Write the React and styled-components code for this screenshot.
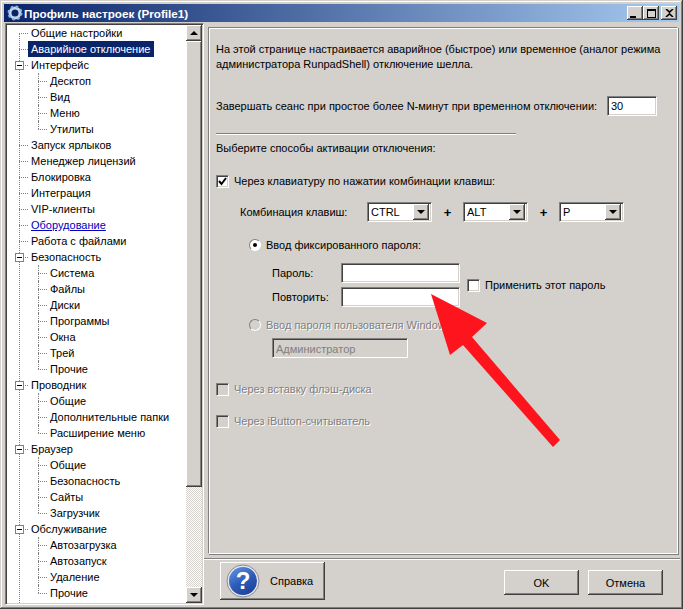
import styled, { createGlobalStyle } from "styled-components";

const FONT = `"Liberation Sans", Arial, sans-serif`;

const treeItems = [
    { label: "Общие настройки" },
    { label: "Аварийное отключение", selected: true },
    { label: "Интерфейс", box: true },
    { label: "Десктоп", level: 1 },
    { label: "Вид", level: 1 },
    { label: "Меню", level: 1 },
    { label: "Утилиты", level: 1, last: true },
    { label: "Запуск ярлыков" },
    { label: "Менеджер лицензий" },
    { label: "Блокировка" },
    { label: "Интеграция" },
    { label: "VIP-клиенты" },
    { label: "Оборудование", link: true },
    { label: "Работа с файлами" },
    { label: "Безопасность", box: true },
    { label: "Система", level: 1 },
    { label: "Файлы", level: 1 },
    { label: "Диски", level: 1 },
    { label: "Программы", level: 1 },
    { label: "Окна", level: 1 },
    { label: "Трей", level: 1 },
    { label: "Прочие", level: 1, last: true },
    { label: "Проводник", box: true },
    { label: "Общие", level: 1 },
    { label: "Дополнительные папки", level: 1 },
    { label: "Расширение меню", level: 1, last: true },
    { label: "Браузер", box: true },
    { label: "Общие", level: 1 },
    { label: "Безопасность", level: 1 },
    { label: "Сайты", level: 1 },
    { label: "Загрузчик", level: 1, last: true },
    { label: "Обслуживание", box: true },
    { label: "Автозагрузка", level: 1 },
    { label: "Автозапуск", level: 1 },
    { label: "Удаление", level: 1 },
    { label: "Прочие", level: 1, last: true },
];

const App = () => {
    return (
        <>
            <GlobalStyle />
            <Window>
                <TitleBar>
                    <GearIcon />
                    <TitleText>Профиль настроек (Profile1)</TitleText>
                    <CaptionButtons>
                        <CaptionButton><MinGlyph /></CaptionButton>
                        <CaptionButton><MaxGlyph /></CaptionButton>
                        <CloseButton>
                            <svg width="9" height="8" viewBox="0 0 9 8">
                                <path d="M1 0l3.500 3.200L8 0M1 8l3.500-3.200L8 8" stroke="#000" strokeWidth="1.600" fill="none" />
                            </svg>
                        </CloseButton>
                    </CaptionButtons>
                </TitleBar>
                <Body>
                    <Tree>
                        <TreeList>
                            {treeItems.map((item, i) => (
                                <TreeRow key={i} $level={item.level || 0} $last={item.last}>
                                    {item.box && <Expander />}
                                    <TreeLabel $selected={item.selected} $link={item.link}>{item.label}</TreeLabel>
                                </TreeRow>
                            ))}
                        </TreeList>
                        <ScrollBar>
                            <ScrollButton><ArrowUp /></ScrollButton>
                            <ScrollThumb />
                            <ScrollTrack />
                            <ScrollButton><ArrowDown /></ScrollButton>
                        </ScrollBar>
                    </Tree>
                    <RightSide>
                        <Panel>
                            <Intro>
                                На этой странице настраивается аварийное (быстрое) или временное (аналог режима<br />
                                администратора RunpadShell) отключение шелла.
                            </Intro>
                            <TimeoutRow>
                                <span>Завершать сеанс при простое более N-минут при временном отключении:</span>
                                <TimeoutInput>30</TimeoutInput>
                            </TimeoutRow>
                            <Divider />
                            <Heading>Выберите способы активации отключения:</Heading>
                            <CheckRow $mt={17}>
                                <CheckBox $checked>
                                    <svg width="9" height="9" viewBox="0 0 9 9">
                                        <path d="M1 4l2.500 3L8 1" stroke="#000" strokeWidth="2" fill="none" />
                                    </svg>
                                </CheckBox>
                                <span>Через клавиатуру по нажатии комбинации клавиш:</span>
                            </CheckRow>
                            <ComboRow>
                                <ComboLabel>Комбинация клавиш:</ComboLabel>
                                <Combo value="CTRL" />
                                <Plus>+</Plus>
                                <Combo value="ALT" />
                                <Plus>+</Plus>
                                <Combo value="P" />
                            </ComboRow>
                            <RadioRow $mt={15}>
                                <Radio $on />
                                <span>Ввод фиксированного пароля:</span>
                            </RadioRow>
                            <PasswordGrid>
                                <FieldLabel>Пароль:</FieldLabel>
                                <Field />
                                <ApplyRow>
                                    <CheckBox />
                                    <span>Применить этот пароль</span>
                                </ApplyRow>
                                <FieldLabel>Повторить:</FieldLabel>
                                <Field />
                            </PasswordGrid>
                            <RadioRow $mt={10} $disabled>
                                <Radio />
                                <span>Ввод пароля пользователя Windows:</span>
                            </RadioRow>
                            <UserField>Администратор</UserField>
                            <CheckRow $mt={23} $disabled>
                                <CheckBox $disabled />
                                <span>Через вставку флэш-диска</span>
                            </CheckRow>
                            <CheckRow $mt={16} $disabled>
                                <CheckBox $disabled />
                                <span>Через iButton-считыватель</span>
                            </CheckRow>
                        </Panel>
                        <FooterRule />
                        <Footer>
                            <HelpButton>
                                <HelpIcon>
                                    <svg width="34" height="34" viewBox="0 0 34 34">
                                        <defs>
                                            <linearGradient id="helpBlue" x1="0.2" y1="0" x2="0.8" y2="1">
                                                <stop offset="0" stopColor="#5f8fe0" />
                                                <stop offset="0.5" stopColor="#2c5cb8" />
                                                <stop offset="1" stopColor="#1c3f96" />
                                            </linearGradient>
                                        </defs>
                                        <circle cx="17" cy="17" r="16" fill="#e8e8ec" stroke="#8a8a98" />
                                        <circle cx="17" cy="17" r="14" fill="url(#helpBlue)" />
                                    </svg>
                                    <HelpMark>?</HelpMark>
                                </HelpIcon>
                                <span>Справка</span>
                            </HelpButton>
                            <FooterActions>
                                <PushButton>OK</PushButton>
                                <PushButton $wide>Отмена</PushButton>
                            </FooterActions>
                        </Footer>
                    </RightSide>
                </Body>
                <ArrowOverlay width="683" height="609" viewBox="0 0 683 609">
                    <path d="M431 294L487 323L472 337L560 440L553 447L463 345L450 355Z" fill="#fe141c" />
                </ArrowOverlay>
            </Window>
        </>
    );
};

const GearIcon = () => (
    <svg width="16" height="16" viewBox="0 0 16 16">
        <circle cx="8" cy="8" r="5" fill="none" stroke="#c4d6ec" strokeWidth="3" />
        <circle cx="8" cy="8" r="6.500" fill="none" stroke="#8fb0d8" strokeWidth="2" strokeDasharray="2.500 2.600" />
        <circle cx="8" cy="8" r="2.500" fill="#0a246a" />
    </svg>
);

const Combo = ({ value }) => (
    <ComboBox>
        <ComboValue>{value}</ComboValue>
        <ComboButton><ArrowDown /></ComboButton>
    </ComboBox>
);

const GlobalStyle = createGlobalStyle`
    html, body {
        margin: 0;
        padding: 0;
        background: #d4d0cc;
    }
    body {
        font-family: ${FONT};
        font-size: 11px;
        color: #000;
    }
`;

const Window = styled.div`
    position: relative;
    box-sizing: border-box;
    width: 683px;
    height: 609px;
    padding: 4px 4px 4px 4px;
    background: #d4d0cc;
    display: flex;
    flex-direction: column;
    overflow: hidden;
    box-shadow: inset -1px -1px 0 #404040, inset 1px 1px 0 #d4d0cc, inset -2px -2px 0 #808080, inset 2px 2px 0 #fff;
`;

const TitleBar = styled.div`
    height: 18px;
    flex: none;
    display: flex;
    align-items: center;
    padding: 0 2px 0 3px;
    gap: 1px;
    background: linear-gradient(90deg, #0a246a, #a6caf0);
`;

const TitleText = styled.div`
    flex: 1;
    color: #fff;
    font-size: 11.700px;
    font-weight: bold;
`;

const CaptionButtons = styled.div`
    display: flex;
`;

const CaptionButton = styled.div`
    box-sizing: border-box;
    width: 16px;
    height: 14px;
    display: flex;
    align-items: center;
    justify-content: center;
    background: #d4d0cc;
    box-shadow: inset -1px -1px 0 #404040, inset 1px 1px 0 #fff, inset -2px -2px 0 #808080;
`;

const CloseButton = styled(CaptionButton)`
    margin-left: 2px;
`;

const MinGlyph = styled.div`
    width: 6px;
    height: 2px;
    background: #000;
    margin: 7px 4px 0 0;
`;

const MaxGlyph = styled.div`
    box-sizing: border-box;
    width: 9px;
    height: 9px;
    border: 1px solid #000;
    border-top-width: 2px;
`;

const Body = styled.div`
    flex: 1;
    min-height: 0;
    display: flex;
    padding-top: 1px;
`;

const Tree = styled.div`
    box-sizing: border-box;
    width: 199px;
    margin-left: 1px;
    flex: none;
    display: flex;
    background: #fff;
    border: 1px solid #808080;
    border-right-color: #fff;
    border-bottom-color: #fff;
    box-shadow: inset 1px 1px 0 #404040, inset -1px -1px 0 #d4d0cc;
    padding: 1px 1px 1px 1px;
    overflow: hidden;
`;

const TreeList = styled.div`
    position: relative;
    flex: 1;
    min-width: 0;
    overflow: hidden;
    &::before {
        content: "";
        position: absolute;
        left: 12px;
        top: 8px;
        bottom: 0;
        border-left: 1px dotted #808080;
    }
`;

const TreeRow = styled.div`
    position: relative;
    height: 16px;
    display: flex;
    align-items: center;
    padding-left: ${(p) => (p.$level === 1 ? 40 : 21)}px;
    &::before {
        content: "";
        position: absolute;
        left: ${(p) => (p.$level === 1 ? 31 : 12)}px;
        top: 8px;
        width: 9px;
        border-top: 1px dotted #808080;
    }
    &::after {
        content: "";
        display: ${(p) => (p.$level === 1 ? "block" : "none")};
        position: absolute;
        left: 31px;
        top: 0;
        height: ${(p) => (p.$last ? 8 : 16)}px;
        border-left: 1px dotted #808080;
    }
`;

const TreeLabel = styled.span`
    padding: 1px 4px 1px 3px;
    line-height: 14px;
    white-space: nowrap;
    background: ${(p) => (p.$selected ? "#0a246a" : "transparent")};
    color: ${(p) => (p.$selected ? "#fff" : p.$link ? "#0000c0" : "#000")};
    text-decoration: ${(p) => (p.$link ? "underline" : "none")};
`;

const Expander = styled.div`
    position: absolute;
    z-index: 1;
    left: 8px;
    top: 4px;
    box-sizing: border-box;
    width: 9px;
    height: 9px;
    border: 1px solid #808080;
    background: #fff;
    &::after {
        content: "";
        position: absolute;
        left: 1px;
        top: 3px;
        width: 5px;
        height: 1px;
        background: #000;
    }
`;

const ScrollBar = styled.div`
    width: 16px;
    flex: none;
    display: flex;
    flex-direction: column;
`;

const ScrollButton = styled.div`
    box-sizing: border-box;
    height: 16px;
    flex: none;
    display: flex;
    align-items: center;
    justify-content: center;
    background: #d4d0cc;
    box-shadow: inset -1px -1px 0 #404040, inset 1px 1px 0 #fff, inset -2px -2px 0 #808080;
`;

const ArrowUp = styled.div`
    width: 0;
    height: 0;
    border-left: 4px solid transparent;
    border-right: 4px solid transparent;
    border-bottom: 4px solid #000;
`;

const ArrowDown = styled.div`
    width: 0;
    height: 0;
    border-left: 4px solid transparent;
    border-right: 4px solid transparent;
    border-top: 4px solid #000;
`;

const ScrollThumb = styled.div`
    height: 446px;
    flex: none;
    box-sizing: border-box;
    background: #d4d0cc;
    box-shadow: inset -1px -1px 0 #404040, inset 1px 1px 0 #fff, inset -2px -2px 0 #808080;
`;

const ScrollTrack = styled.div`
    flex: 1;
    background-color: #fff;
    background-image: conic-gradient(#d4d0cc 25%, #fff 0 50%, #d4d0cc 0 75%, #fff 0);
    background-size: 2px 2px;
`;

const RightSide = styled.div`
    flex: 1;
    min-width: 0;
    display: flex;
    flex-direction: column;
    padding-left: 4px;
`;

const Panel = styled.div`
    box-sizing: border-box;
    height: 527px;
    width: 470px;
    margin-top: 4px;
    padding: 14px 8px 0 7px;
    border: 1px solid #808080;
    border-right-color: #fff;
    border-bottom-color: #fff;
    box-shadow: inset 1px 1px 0 #fff, 1px 1px 0 #808080;
`;

const Intro = styled.div`
    line-height: 15px;
`;

const TimeoutRow = styled.div`
    margin-top: 24px;
    height: 20px;
    display: flex;
    align-items: center;
    justify-content: space-between;
    padding-right: 12px;
`;

const Sunken = styled.div`
    box-sizing: border-box;
    background: #fff;
    border: 1px solid;
    border-color: #808080 #fff #fff #808080;
    box-shadow: inset 1px 1px 0 #404040, inset -1px -1px 0 #d4d0cc;
`;

const TimeoutInput = styled(Sunken)`
    width: 50px;
    height: 20px;
    padding: 2px 3px;
    line-height: 14px;
`;

const Divider = styled.div`
    margin-top: 17px;
    width: 300px;
    border-top: 1px solid #808080;
    border-bottom: 1px solid #fff;
`;

const Heading = styled.div`
    margin-top: 6px;
    line-height: 15px;
`;

const CheckRow = styled.div`
    margin-top: ${(p) => p.$mt}px;
    height: 16px;
    display: flex;
    align-items: center;
    gap: 5px;
    color: ${(p) => (p.$disabled ? "#808080" : "#000")};
    text-shadow: ${(p) => (p.$disabled ? "1px 1px 0 #fff" : "none")};
`;

const CheckBox = styled(Sunken)`
    width: 13px;
    height: 13px;
    flex: none;
    display: flex;
    align-items: center;
    justify-content: center;
    background: ${(p) => (p.$disabled ? "#d4d0cc" : "#fff")};
`;

const ComboRow = styled.div`
    margin-top: 13px;
    height: 20px;
    display: flex;
    align-items: center;
    padding-left: 24px;
`;

const ComboLabel = styled.div`
    width: 127px;
    flex: none;
`;

const ComboBox = styled(Sunken)`
    width: 65px;
    height: 20px;
    flex: none;
    display: flex;
    align-items: center;
    justify-content: space-between;
    padding: 0 2px 0 3px;
`;

const ComboValue = styled.span`
    line-height: 14px;
`;

const ComboButton = styled.div`
    width: 16px;
    height: 16px;
    display: flex;
    align-items: center;
    justify-content: center;
    background: #d4d0cc;
    box-shadow: inset -1px -1px 0 #404040, inset 1px 1px 0 #fff, inset -2px -2px 0 #808080;
`;

const Plus = styled.div`
    width: 31px;
    flex: none;
    text-align: center;
    font-weight: bold;
    font-size: 13px;
`;

const RadioRow = styled.div`
    margin-top: ${(p) => p.$mt}px;
    height: 16px;
    display: flex;
    align-items: center;
    gap: 5px;
    padding-left: 33px;
    color: ${(p) => (p.$disabled ? "#808080" : "#000")};
    text-shadow: ${(p) => (p.$disabled ? "1px 1px 0 #fff" : "none")};
`;

const Radio = styled.div`
    position: relative;
    box-sizing: border-box;
    width: 12px;
    height: 12px;
    flex: none;
    border-radius: 50%;
    border: 1px solid;
    border-color: #808080 #fff #fff #808080;
    background: ${(p) => (p.$on ? "#fff" : "#d4d0cc")};
    &::after {
        content: "";
        display: ${(p) => (p.$on ? "block" : "none")};
        position: absolute;
        left: 3px;
        top: 3px;
        width: 4px;
        height: 4px;
        border-radius: 50%;
        background: #000;
    }
`;

const PasswordGrid = styled.div`
    margin-top: 10px;
    padding-left: 56px;
    display: grid;
    grid-template-columns: 69px 119px auto;
    grid-auto-rows: 20px;
    row-gap: 4px;
    align-items: center;
`;

const FieldLabel = styled.div``;

const Field = styled(Sunken)`
    height: 20px;
`;

const ApplyRow = styled.div`
    grid-column: 3;
    grid-row: 1 / 3;
    display: flex;
    align-items: center;
    gap: 5px;
    margin-left: 7px;
`;

const UserField = styled(Sunken)`
    margin: 5px 0 0 56px;
    width: 136px;
    height: 20px;
    padding: 3px 3px 0;
    line-height: 14px;
    color: #808080;
    background: #d4d0cc;
`;

const FooterRule = styled.div`
    margin: 4px -1px 0 -4px;
    border-top: 1px solid #808080;
    border-bottom: 1px solid #fff;
`;

const Footer = styled.div`
    flex: 1;
    display: flex;
    align-items: flex-start;
    justify-content: space-between;
    padding: 2px 16px 0 12px;
`;

const Raised = styled.div`
    box-sizing: border-box;
    display: flex;
    align-items: center;
    justify-content: center;
    background: #d4d0cc;
    box-shadow: inset -1px -1px 0 #404040, inset 1px 1px 0 #fff, inset -2px -2px 0 #808080;
`;

const HelpButton = styled(Raised)`
    width: 105px;
    height: 38px;
    gap: 10px;
    justify-content: flex-start;
    padding-left: 6px;
`;

const HelpIcon = styled.div`
    position: relative;
    width: 34px;
    height: 34px;
    display: flex;
`;

const HelpMark = styled.span`
    position: absolute;
    inset: 0;
    display: flex;
    align-items: center;
    justify-content: center;
    color: #fff;
    font-size: 24px;
    font-weight: bold;
`;

const FooterActions = styled.div`
    display: flex;
    gap: 9px;
    margin-top: 8px;
`;

const PushButton = styled(Raised)`
    width: 75px;
    height: 25px;
`;

const ArrowOverlay = styled.svg`
    position: absolute;
    left: 0;
    top: 0;
    pointer-events: none;
`;

export default App;
